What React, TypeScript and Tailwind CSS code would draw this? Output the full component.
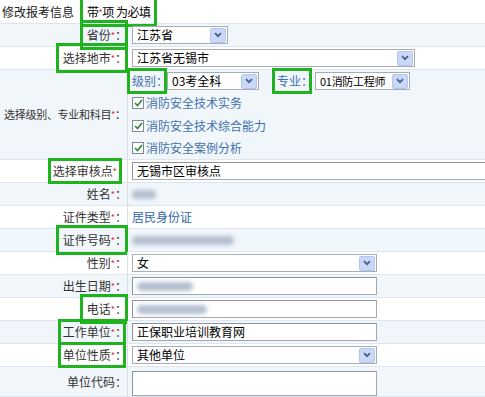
import type { ReactNode } from "react"

const font = { fontFamily: '"Noto Sans CJK SC", "Liberation Sans", sans-serif' }

function Star() {
    return <span className="text-[9px] text-[#e3262d] relative -top-[1px]">*</span>
}

// full-width colon with its trailing blank trimmed
function Colon() {
    return <span className="inline-block w-[6px] overflow-visible">：</span>
}

function Boxed({ children, tight }: { children: ReactNode; tight?: boolean }) {
    return (
        <span
            className={
                tight
                    ? "inline-block -mx-[2px] -my-[1px] px-[2px] py-[1px] outline-3 outline-[#1fb41f]"
                    : "inline-block -mx-[4px] -my-[3px] px-[4px] py-[3px] outline-3 outline-[#1fb41f]"
            }
        >
            {children}
        </span>
    )
}

function Chevron() {
    return (
        <span className="flex h-[15px] w-[16px] shrink-0 items-center justify-center rounded-[2px] border border-[#b4c6ee] bg-[#c9d8f7]">
            <svg width="8" height="6" viewBox="0 0 8 6">
                <path d="M1 1.2 L4 4.2 L7 1.2" fill="none" stroke="#4a5f8a" strokeWidth="1.8" />
            </svg>
        </span>
    )
}

function Select({ value, className, small }: { value: string; className: string; small?: boolean }) {
    return (
        <div className={`flex h-[18px] items-center border border-[#a7adb4] bg-white pr-[1px] ${className}`}>
            <span
                className={`flex-1 whitespace-nowrap pl-[4px] leading-[16px] text-black ${
                    small ? "text-[11px] tracking-[-0.3px]" : "text-[12px]"
                }`}
            >
                {value}
            </span>
            <Chevron />
        </div>
    )
}

function Input({ children, className }: { children?: ReactNode; className: string }) {
    return (
        <div className={`flex items-center border border-[#a3a9b0] border-t-[#8d949b] border-l-[#8d949b] bg-white pl-[4px] text-[12px] leading-[16px] text-black ${className}`}>
            {children}
        </div>
    )
}

function Blur({ w }: { w: string }) {
    return <span className={`inline-block h-[9px] rounded-full bg-[#b3bfcf] blur-[2px] ${w}`} />
}

function Row({
    label,
    children,
    alt,
    h = "h-[23px]",
    top = false
}: {
    label: ReactNode
    children: ReactNode
    alt?: boolean
    h?: string
    top?: boolean
}) {
    return (
        <div className={`flex border-b border-[#dde5ee] ${h} ${alt ? "bg-[#f1f6fb]" : "bg-white"}`}>
            <div className="flex w-[128px] shrink-0 items-center justify-end whitespace-nowrap border-r border-[#d6dee7] pr-[6px] text-[12px] text-[#333]">
                {label}
            </div>
            <div className={`flex flex-1 whitespace-nowrap pl-[4px] text-[12px] ${top ? "flex-col" : "items-center"}`}>
                {children}
            </div>
        </div>
    )
}

function Check({ text }: { text: string }) {
    return (
        <div className="flex h-[23px] items-center">
            <span className="flex h-[12px] w-[12px] items-center justify-center border border-[#7d8a99] bg-white">
                <svg width="9" height="8" viewBox="0 0 9 8">
                    <path d="M1 4 L3.5 6.5 L8 1" fill="none" stroke="#2d8a2d" strokeWidth="1.7" />
                </svg>
            </span>
            <span className="ml-[2px] text-[12px] text-[#3f70ad]">{text}</span>
        </div>
    )
}

export default function App() {
    return (
        <div className="w-[485px] h-[397px] overflow-hidden bg-white" style={font}>
            <div className="flex h-[24px] items-center border-b border-[#dde5ee] pl-[2px] text-[12px] text-[#222]">
                <span>修改报考信息</span>
                <span className="ml-[13px]">
                    <Boxed>
                        <span className="text-[12px] tracking-[-0.5px] text-black">
                            带<Star />项 为必填
                        </span>
                    </Boxed>
                </span>
            </div>

            <Row
                alt
                label={
                    <Boxed>
                        省份<Star /><Colon />
                    </Boxed>
                }
            >
                <Select value="江苏省" className="w-[96px]" />
            </Row>

            <Row
                label={
                    <Boxed>
                        选择地市<Star /><Colon />
                    </Boxed>
                }
            >
                <Select value="江苏省无锡市" className="w-[283px]" />
            </Row>

            <Row
                alt
                h="h-[90px]"
                top
                label={
                    <span className="text-[11px] tracking-[-0.3px]">
                        选择级别、专业和科目<Star /><Colon />
                    </span>
                }
            >
                <div className="flex h-[23px] items-center">
                    <Boxed tight>
                        <span className="text-[#3f70ad]">级别<Colon /></span>
                    </Boxed>
                    <Select value="03考全科" className="ml-[5px] w-[92px]" />
                    <span className="ml-[18px]">
                        <Boxed tight>
                            <span className="text-[#3f70ad]">专业<Colon /></span>
                        </Boxed>
                    </span>
                    <Select value="01消防工程师" small className="ml-[8px] w-[95px]" />
                </div>
                <Check text="消防安全技术实务" />
                <Check text="消防安全技术综合能力" />
                <Check text="消防安全案例分析" />
            </Row>

            <Row
                label={
                    <span className="mr-[4px]">
                        <Boxed tight>
                            选择审核点<Star />
                        </Boxed>
                    </span>
                }
            >
                <Input className="h-[18px] w-[370px]">无锡市区审核点</Input>
            </Row>

            <Row alt label={<span>姓名<Star /><Colon /></span>}>
                <Blur w="w-[24px]" />
            </Row>

            <Row label={<span>证件类型<Star /><Colon /></span>}>
                <span className="text-[#2f66a8]">居民身份证</span>
            </Row>

            <Row
                alt
                label={
                    <Boxed>
                        证件号码<Star /><Colon />
                    </Boxed>
                }
            >
                <Blur w="w-[102px]" />
            </Row>

            <Row label={<span>性别<Star /><Colon /></span>}>
                <Select value="女" className="w-[245px]" />
            </Row>

            <Row alt label={<span>出生日期<Star /><Colon /></span>}>
                <Input className="h-[18px] w-[245px]">
                    <Blur w="w-[56px]" />
                </Input>
            </Row>

            <Row
                label={
                    <Boxed>
                        电话<Star /><Colon />
                    </Boxed>
                }
            >
                <Input className="h-[18px] w-[245px]">
                    <Blur w="w-[70px]" />
                </Input>
            </Row>

            <Row
                alt
                label={
                    <Boxed tight>
                        工作单位<Star /><Colon />
                    </Boxed>
                }
            >
                <Input className="h-[18px] w-[245px]">正保职业培训教育网</Input>
            </Row>

            <Row
                label={
                    <Boxed tight>
                        单位性质<Star /><Colon />
                    </Boxed>
                }
            >
                <Select value="其他单位" className="w-[245px]" />
            </Row>

            <Row alt h="h-[30px]" top label={<span>单位代码<Colon /></span>}>
                <Input className="mt-[4px] h-[26px] w-[245px]" />
            </Row>
        </div>
    )
}
